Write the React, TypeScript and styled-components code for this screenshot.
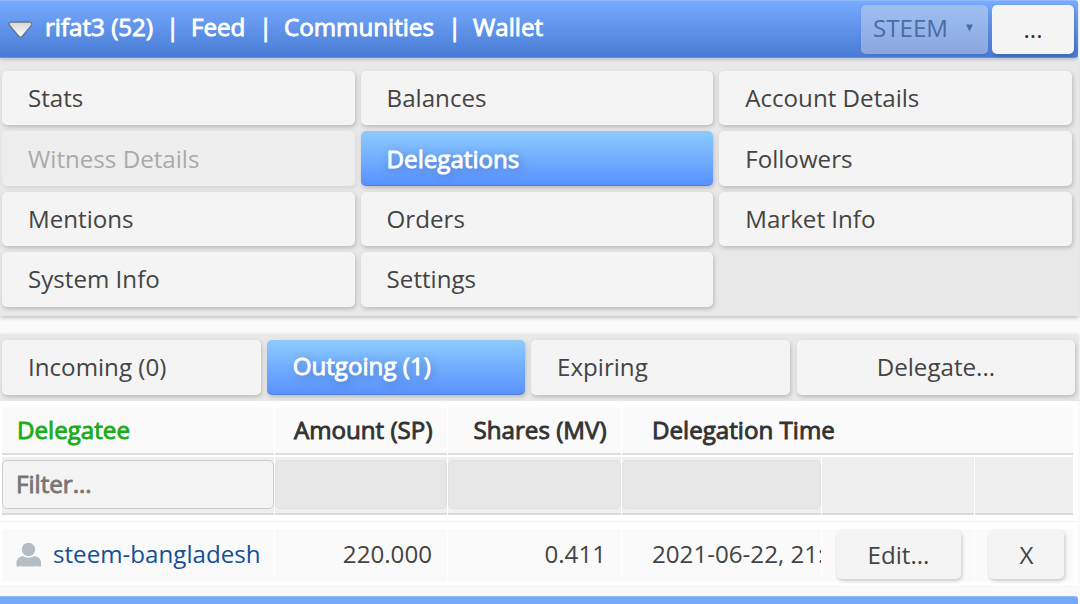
import React from 'react';
import styled, { createGlobalStyle, css } from 'styled-components';

const Global = createGlobalStyle`
  * { box-sizing: border-box; }
  body {
    margin: 0;
    background: #fafafa;
    color: #444;
    font-family: "Open Sans", sans-serif;
    font-size: 24.15px;
    overflow: hidden;
  }
`;

const heavy = css`
  -webkit-text-stroke: 0.9px currentColor;
`;

const raised = css`
  border-radius: 5px;
  background: #f4f4f4;
  box-shadow: 1px 2px 4px rgba(0, 0, 0, 0.2);
`;

const Page = styled.div`
  width: 1080px;
  height: 604px;
  overflow: hidden;
  display: flex;
  flex-direction: column;
`;

const Header = styled.header`
  position: relative;
  z-index: 1;
  width: 1078px;
  height: 58px;
  flex: none;
  display: flex;
  align-items: flex-start;
  padding: 5px 4px 0 8px;
  border-top: 1px solid #8fb9f8;
  border-bottom: 1px solid #6d8fcb;
  border-radius: 0 3px 3px 0;
  background: linear-gradient(#77abff, #487bd3);
  box-shadow: 0 2px 3px rgba(80, 100, 160, 0.25);
`;

const Arrow = styled.svg`
  margin: 14px 11px 0 0;
  flex: none;
`;

const Crumbs = styled.nav`
  flex: 1;
  display: flex;
  line-height: 42px;
  color: #fff;
  white-space: pre;
  ${heavy}
`;

const Crumb = styled.span<{ $w: number }>`
  width: ${(p) => p.$w}px;
`;

const Network = styled.div`
  display: flex;
  justify-content: space-between;
  width: 127px;
  height: 49px;
  margin: -1px 4px 0 0;
  padding: 0 15px 0 12px;
  border-radius: 5px;
  line-height: 45px;
  color: #4a6ca7;
  background: linear-gradient(#9fbef0, #8aa8df);
  box-shadow: 1px 1px 3px rgba(50, 80, 150, 0.2);
`;

const Caret = styled.svg`
  margin-top: 19px;
`;

const More = styled.button`
  width: 82px;
  height: 49px;
  margin-top: -1px;
  padding: 0 0 1px;
  border: 0;
  ${raised}
  color: #333;
  font: inherit;
  line-height: 40px;
`;

const Menu = styled.section`
  width: 1079px;
  height: 258px;
  flex: none;
  display: grid;
  grid-template-columns: repeat(3, 352.6px);
  grid-auto-rows: 54.4px;
  gap: 6px;
  padding: 13px 6px 9px 2px;
  background: #e8e8e8;
  box-shadow: 0 2px 4px rgba(0, 0, 0, 0.22);
`;

const Tab = styled.button<{ $active?: boolean; $disabled?: boolean; $center?: boolean }>`
  border: 0;
  padding: 0 26px 1px;
  ${raised}
  color: #444;
  font: inherit;
  text-align: ${(p) => (p.$center ? 'center' : 'left')};
  ${(p) =>
    p.$disabled &&
    css`
      color: #aaa;
      background: #eee;
      box-shadow: 1px 2px 4px rgba(0, 0, 0, 0.08);
    `}
  ${(p) =>
    p.$active &&
    css`
      padding-bottom: 0;
      color: #fff;
      background: linear-gradient(#8dcbff, #5892ff);
      border-bottom: 1px solid #527fd2;
      text-shadow: 2px 2px 8px rgba(40, 60, 100, 0.5);
      ${heavy}
    `}
`;

const SubTabs = styled.section`
  width: 1079px;
  height: 67px;
  flex: none;
  margin-top: 18px;
  display: grid;
  grid-template-columns: 258.7px 258.3px 258.7px 279px;
  column-gap: 6px;
  padding: 6px 3px 6.500px 2px;
  background: #e8e8e8;
  box-shadow: 0 0 3px rgba(0, 0, 0, 0.1);

  & > button { padding-bottom: 2px; }
  & > :last-child { margin-left: 1px; margin-right: -0.5px; }
`;

const Table = styled.section`
  position: relative;
  width: 1078px;
  height: 186px;
  flex: none;
  padding: 6px 5px 0 2px;
  background: #fff;
  border-bottom: 1px solid #f3f3f3;
`;

const columns = '272px 172px 173px 199px 152px 98px';

const HeadRow = styled.div`
  display: grid;
  grid-template-columns: ${columns};
  column-gap: 1px;
  height: 48px;
  color: #333;
  ${heavy}
`;

const HeadCell = styled.div<{ $right?: boolean; $sorted?: boolean; $wide?: boolean }>`
  grid-column: ${(p) => (p.$wide ? 'span 3' : 'auto')};
  padding: 0 ${(p) => (p.$right ? 14.5 : 15)}px 0 ${(p) => (p.$wide ? 30 : 15)}px;
  line-height: 45px;
  white-space: nowrap;
  text-align: ${(p) => (p.$right ? 'right' : 'left')};
  color: ${(p) => (p.$sorted ? '#1aac1a' : 'inherit')};
  background: #fafafa;
  border-bottom: 2px solid #dcdcdc;
`;

const FilterRow = styled.div`
  display: grid;
  grid-template-columns: ${columns};
  column-gap: 1px;
  height: 58px;
  margin-top: 2px;
`;

const FilterCell = styled.div`
  padding-top: 3px;
  background: #efefef;
  border-bottom: 2px solid #dadada;
`;

const FilterInput = styled.input`
  display: block;
  width: 100%;
  height: 49px;
  padding: 0 13px 2px;
  border: 1px solid #ccc;
  border-radius: 5px;
  background: #f4f4f4;
  font: inherit;
  outline: 0;
  &::placeholder {
    color: #777;
    opacity: 1;
    ${heavy}
  }
  &:disabled {
    background: #e7e7e7;
    border-color: #e0e0e0;
  }
`;

const Divider = styled.div`
  height: 1px;
  margin: 6px -5px 7px -2px;
  background: #f4f4f4;
`;

const DataRow = styled.div`
  display: grid;
  grid-template-columns: ${columns};
  column-gap: 1px;
  height: 52px;
  line-height: 50px;
`;

const Cell = styled.div<{ $right?: boolean }>`
  padding: 0 15px;
  white-space: nowrap;
  overflow: hidden;
  text-align: ${(p) => (p.$right ? 'right' : 'left')};
  background: #fafafa;
`;

const Account = styled(Cell)`
  display: flex;
  gap: 11px;
  padding: 0 0 0 14px;
  color: #164f95;
`;

const Time = styled(Cell)`
  padding: 0 0 0 30px;
`;

const Person = styled.svg`
  margin-top: 13px;
  flex: none;
`;

const ActionCell = styled.div`
  display: flex;
  justify-content: flex-end;
  padding-right: 13.5px;
  background: #fafafa;
`;

const LastActionCell = styled(ActionCell)`
  padding-right: 9px;
`;

const Action = styled.button<{ $w: number }>`
  width: ${(p) => p.$w}px;
  height: 49px;
  margin-top: 1px;
  padding: 0 0 2px;
  border: 0;
  ${raised}
  color: #444;
  font: inherit;
`;

const Footer = styled.footer`
  width: 1078px;
  height: 20px;
  flex: none;
  margin-top: 9px;
  border-top: 1px solid #8fb9f8;
  border-radius: 0 3px 0 0;
  background: #74a9fb;
`;

const menu = [
  'Stats', 'Balances', 'Account Details',
  'Witness Details', 'Delegations', 'Followers',
  'Mentions', 'Orders', 'Market Info',
  'System Info', 'Settings',
];

export default function App() {
  return (
    <Page>
      <Global />
      <Header>
        <Arrow width="26" height="20" viewBox="0 0 26 20">
          <defs>
            <linearGradient id="arrow" x1="0" y1="0" x2="0" y2="1">
              <stop offset="0" stopColor="#d5d5d5" />
              <stop offset="1" stopColor="#fff" />
            </linearGradient>
          </defs>
          <path d="M3 2H22Q25 3 23 6L14.5 16Q12.5 18.500 10.500 16L2 6Q-.3 3 3 2Z" fill="url(#arrow)" stroke="#63758f" strokeWidth="1.3" />
        </Arrow>
        <Crumbs>
          <Crumb $w={121}>rifat3 (52)</Crumb>
          <Crumb $w={25}>|</Crumb>
          <Crumb $w={68}>Feed</Crumb>
          <Crumb $w={25}>|</Crumb>
          <Crumb $w={164}>Communities</Crumb>
          <Crumb $w={25}>|</Crumb>
          <Crumb $w={80}>Wallet</Crumb>
        </Crumbs>
        <Network>
          STEEM
          <Caret width="7" height="8" viewBox="0 0 7 8">
            <path d="M0 .5H7L3.500 7.500Z" fill="#4a6ca7" />
          </Caret>
        </Network>
        <More>...</More>
      </Header>
      <Menu>
        {menu.map((name) => (
          <Tab key={name} $active={name === 'Delegations'} $disabled={name === 'Witness Details'}>
            {name}
          </Tab>
        ))}
      </Menu>
      <SubTabs>
        <Tab>Incoming (0)</Tab>
        <Tab $active>Outgoing (1)</Tab>
        <Tab>Expiring</Tab>
        <Tab $center>Delegate...</Tab>
      </SubTabs>
      <Table>
        <HeadRow>
          <HeadCell $sorted>Delegatee</HeadCell>
          <HeadCell $right>Amount (SP)</HeadCell>
          <HeadCell $right>Shares (MV)</HeadCell>
          <HeadCell $wide>Delegation Time</HeadCell>
        </HeadRow>
        <FilterRow>
          <FilterCell><FilterInput placeholder="Filter..." /></FilterCell>
          <FilterCell><FilterInput disabled /></FilterCell>
          <FilterCell><FilterInput disabled /></FilterCell>
          <FilterCell><FilterInput disabled /></FilterCell>
          <FilterCell />
          <FilterCell />
        </FilterRow>
        <Divider />
        <DataRow>
          <Account>
            <Person width="26" height="26" viewBox="0 0 26 26">
              <g fill="#b4bdc3">
                <circle cx="12.500" cy="7.500" r="6.700" />
                <path d="M.5 24.500V21Q.5 15.500 6.500 14Q12.500 17.500 18.500 14Q25 15.500 25 21V24.500H21.500L20.500 23.500 19.500 24.500H5.500L4.500 23.500 3.500 24.500Z" />
              </g>
            </Person>
            steem-bangladesh
          </Account>
          <Cell $right>220.000</Cell>
          <Cell $right>0.411</Cell>
          <Time>2021-06-22, 21:</Time>
          <ActionCell><Action $w={124}>Edit...</Action></ActionCell>
          <LastActionCell><Action $w={75}>X</Action></LastActionCell>
        </DataRow>
      </Table>
      <Footer />
    </Page>
  );
}
